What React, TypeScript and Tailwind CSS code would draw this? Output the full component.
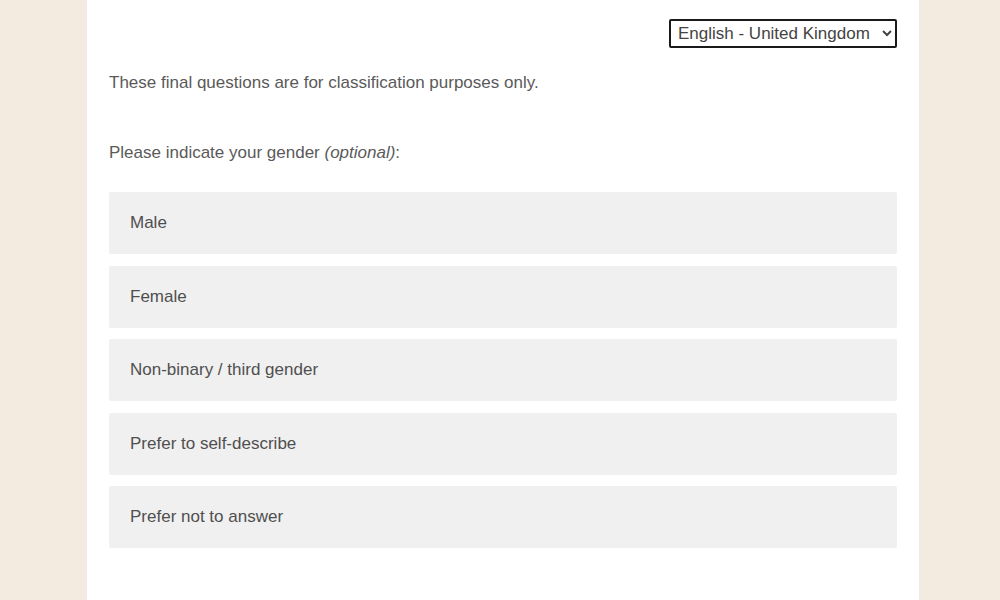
import { useState } from "react";

const options = [
  "Male",
  "Female",
  "Non-binary / third gender",
  "Prefer to self-describe",
  "Prefer not to answer",
];

export default function App() {
  const [picked, setPicked] = useState<string | null>(null);

  return (
    <div className="min-h-[600px] bg-[#f3ebdf] font-['Liberation_Sans',Arial,sans-serif]">
      <div className="ml-[87px] w-[832px] min-h-[600px] bg-white px-[22px] pt-[19px]">
        {/* language picker */}
        <div className="flex justify-end">
          <select className="h-[29px] w-[228px] rounded-[2px] border-2 border-[#1a1a1a] bg-white pl-[3px] text-[17px] text-[#444]">
            <option>English - United Kingdom</option>
          </select>
        </div>

        <p className="mt-[25px] text-[17px] leading-[20px] text-[#5a5a5a]">
          These final questions are for classification purposes only.
        </p>

        <p className="mt-[50px] text-[17px] leading-[20px] text-[#5a5a5a]">
          Please indicate your gender <i>(optional)</i>:
        </p>

        <div className="mt-[29px] flex flex-col gap-[11.5px]">
          {options.map((o) => (
            <button
              key={o}
              onClick={() => setPicked(o)}
              className={
                "flex h-[62px] items-center rounded-[2px] px-[21px] text-left text-[17px] text-[#4f4f4f] " +
                (picked === o ? "bg-[#e2e2e2]" : "bg-[#f0f0f0]")
              }
            >
              {o}
            </button>
          ))}
        </div>
      </div>
    </div>
  );
}
